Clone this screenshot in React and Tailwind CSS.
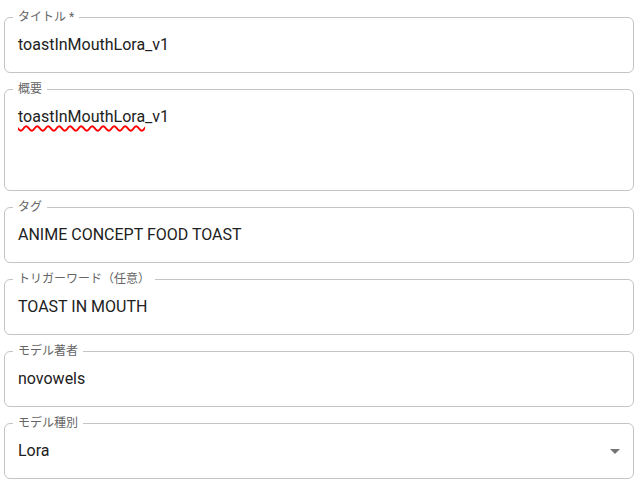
const font = { fontFamily: '"Roboto", "Noto Sans CJK JP", sans-serif' };

function Field({ label, children, tall = false }) {
  return (
    <fieldset className="m-0 min-w-0 rounded-[6px] border border-[#c4c4c4] px-[8px] py-0">
      <legend className="px-[5px] text-[12px] leading-[12px] text-[#666666]">{label}</legend>
      <div
        className={
          (tall ? "h-[95px]" : "h-[49px]") +
          " flex items-start px-[5px] pt-[10px] text-[16px] leading-[23px] text-[#212121]"
        }
      >
        {children}
      </div>
    </fieldset>
  );
}

export default function App() {
  return (
    <div className="min-h-[486px] w-[641px] bg-white" style={font}>
      <div className="flex flex-col gap-[10px] pl-[4px] pr-[7px] pt-[11px]">
        <Field label="タイトル *">toastInMouthLora_v1</Field>

        <Field label="概要" tall>
          <span>
            <span className="underline decoration-wavy decoration-[#ff0000] decoration-[1.5px] underline-offset-[3px]">
              toastInMouthLora
            </span>
            _v1
          </span>
        </Field>

        <Field label="タグ">ANIME CONCEPT FOOD TOAST</Field>

        <Field label="トリガーワード（任意）">TOAST IN MOUTH</Field>

        <Field label="モデル著者">novowels</Field>

        <Field label="モデル種別">
          <div className="flex w-full items-start justify-between">
            <span>Lora</span>
            <svg viewBox="0 0 24 24" className="mr-[-7px] h-[24px] w-[24px] fill-[#757575]">
              <path d="M7 10l5 5 5-5z" />
            </svg>
          </div>
        </Field>
      </div>
    </div>
  );
}
